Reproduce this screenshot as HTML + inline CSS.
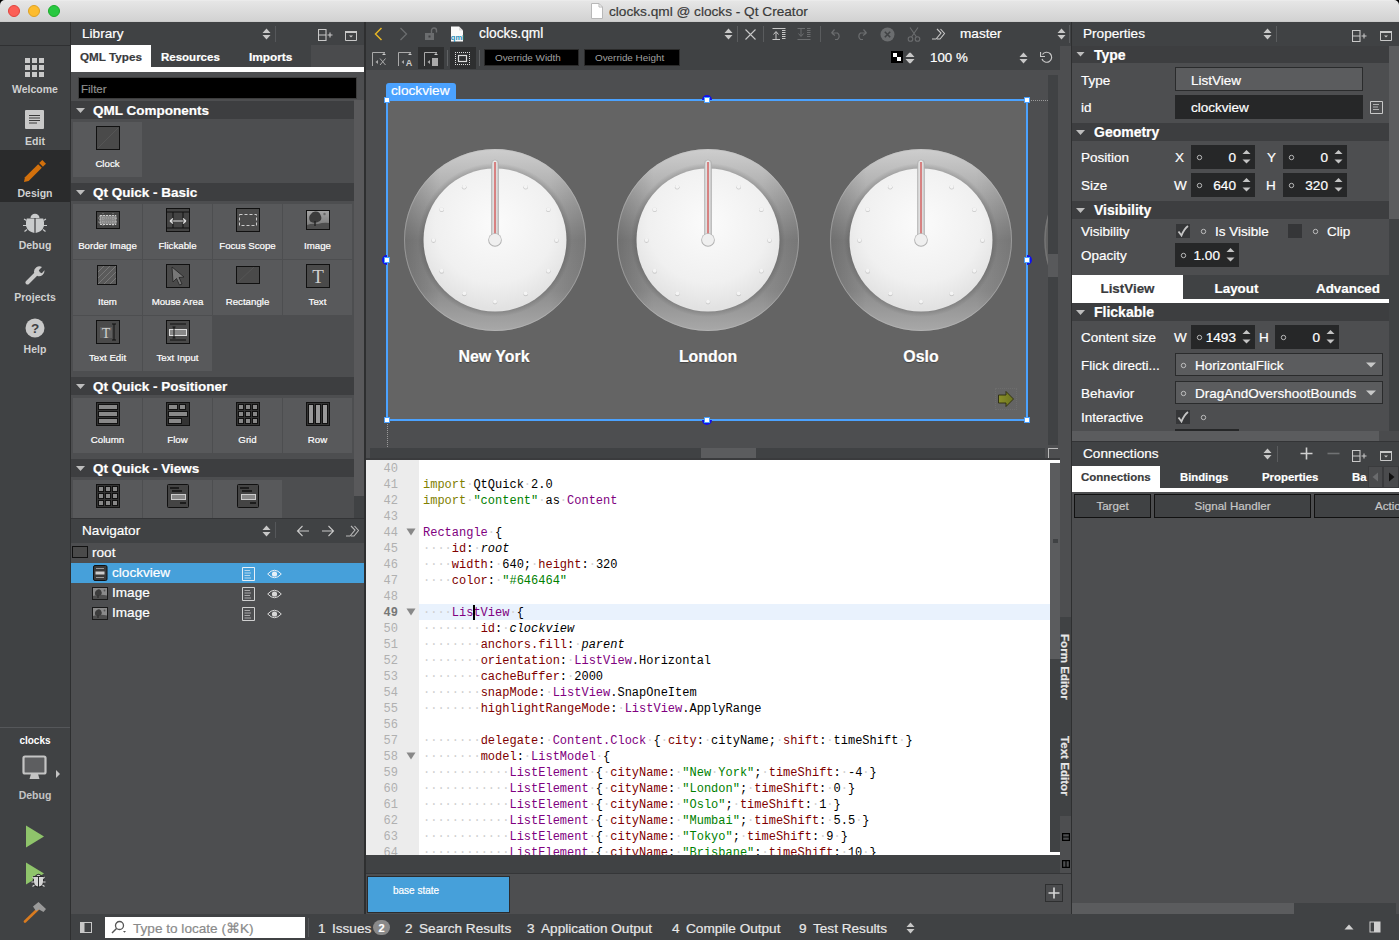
<!DOCTYPE html>
<html><head><meta charset="utf-8">
<style>
*{margin:0;padding:0;box-sizing:border-box}
html,body{width:1399px;height:940px;overflow:hidden;background:#4d4e50;font-family:"Liberation Sans",sans-serif;color:#fff}
.a{position:absolute}
.t{position:absolute;white-space:nowrap;line-height:1;-webkit-text-stroke:0.2px currentColor}
#code .t{-webkit-text-stroke:0}
#title{left:0;top:0;width:1399px;height:22px;background:linear-gradient(#f0f0f0 0,#e6e6e6 1px,#d2d2d2 21px,#c4c4c4 22px);border-radius:5px 5px 0 0}
html,body{background:#4d4e50}
#modebar{left:0;top:22px;width:71px;height:918px;background:#404244;border-right:1px solid #2e2f30}
.hdr{background:#404244}
.sec{background:#3d3e40}
.cell{background:#58595b}
.mlbl{position:absolute;left:0;width:70px;text-align:center;font-size:10.5px;font-weight:bold;color:#cfd0d0;line-height:1}
</style></head><body>
<!-- TITLE BAR -->
<div class="a" style="left:0;top:0;width:6px;height:6px;background:#000"></div><div class="a" style="left:1393px;top:0;width:6px;height:6px;background:#000"></div>
<div id="title" class="a">
  <div class="a" style="left:8px;top:5px;width:12px;height:12px;border-radius:50%;background:#fc5f57;border:0.5px solid #e0443e"></div>
  <div class="a" style="left:28px;top:5px;width:12px;height:12px;border-radius:50%;background:#fdbc2e;border:0.5px solid #dea123"></div>
  <div class="a" style="left:48px;top:5px;width:12px;height:12px;border-radius:50%;background:#28c840;border:0.5px solid #1aab29"></div>
  <svg class="a" style="left:591px;top:3px" width="12" height="16" viewBox="0 0 12 16"><path d="M0.5 0.5H8L11.5 4V15.5H0.5Z" fill="#fff" stroke="#b8b8b8"/><path d="M8 0.5V4H11.5" fill="none" stroke="#b8b8b8"/></svg>
  <div class="t" style="left:609px;top:5px;font-size:13.65px;color:#3a3a3a">clocks.qml @ clocks - Qt Creator</div>
</div>
<!-- MODE BAR -->

<div id="modebar" class="a">
  <div class="a" style="left:0;top:23px;width:70px;height:1px;background:#2f3032"></div>
  <!-- welcome -->
  <svg class="a" style="left:25px;top:36px" width="20" height="20" viewBox="0 0 20 20" fill="#c9c9c9">
    <rect x="0" y="0" width="5" height="5"/><rect x="7" y="0" width="5" height="5"/><rect x="14" y="0" width="5" height="5"/>
    <rect x="0" y="7" width="5" height="5"/><rect x="7" y="7" width="5" height="5"/><rect x="14" y="7" width="5" height="5"/>
    <rect x="0" y="14" width="5" height="5"/><rect x="7" y="14" width="5" height="5"/><rect x="14" y="14" width="5" height="5"/>
  </svg>
  <div class="mlbl" style="top:62px">Welcome</div>
  <!-- edit -->
  <svg class="a" style="left:25px;top:88px" width="20" height="20" viewBox="0 0 20 20">
    <rect x="0" y="0" width="19" height="19" rx="1" fill="#c9c9c9"/>
    <path d="M4 5.5H15M4 8H15M4 10.5H15M4 13H12" stroke="#3a3a3a" stroke-width="1"/>
  </svg>
  <div class="mlbl" style="top:114px">Edit</div>
  <!-- design selected -->
  <div class="a" style="left:0;top:128px;width:70px;height:52px;background:#2a2b2c"></div>
  <svg class="a" style="left:20px;top:136px" width="28" height="28" viewBox="0 0 28 28"><path d="M4 24L8.64 23.04L21.84 9.84L18.16 6.16L4.96 19.36Z" fill="#d2700c"/><path d="M22.9 8.8L26 5.7L22.3 2L19.2 5.1Z" fill="#d2700c"/></svg>
  <div class="mlbl" style="top:166px">Design</div>
  <!-- debug -->
  <svg class="a" style="left:22px;top:190px" width="26" height="22" viewBox="0 0 26 22">
<path d="M8.5 6A4.5 4.2 0 0 1 17.5 6Z" fill="#c9cbcc"/>
<path d="M12.4 6.5H4.8Q3.5 10 4 14Q5.5 19.5 12.4 21Z" fill="#c9cbcc"/>
<path d="M13.6 6.5H21.2Q22.5 10 22 14Q20.5 19.5 13.6 21Z" fill="#c9cbcc"/>
<path d="M4.5 8.5L2 7M4 13.5H1M5 17.5L2.5 19.5M21.5 8.5L24 7M22 13.5H25M21 17.5L23.5 19.5" stroke="#c9cbcc" stroke-width="1.2"/>
</svg>
  <div class="mlbl" style="top:218px">Debug</div>
  <!-- projects -->
  <svg class="a" style="left:25px;top:243px" width="20" height="20" viewBox="0 0 20 20">
    <path d="M2.5 17.5L10.5 9.5" stroke="#c9c9c9" stroke-width="4" stroke-linecap="round"/>
    <path d="M9 7.5A5.5 5.5 0 0 1 17 2L13.8 5.2L14.8 7.2L16.8 8.2L19.5 5.2A5.5 5.5 0 0 1 12.5 11Z" fill="#c9c9c9"/>
  </svg>
  <div class="mlbl" style="top:270px">Projects</div>
  <!-- help -->
  <svg class="a" style="left:25px;top:296px" width="20" height="20" viewBox="0 0 20 20">
    <circle cx="10" cy="10" r="9.5" fill="#c9c9c9"/>
    <text x="10" y="15" text-anchor="middle" font-family="Liberation Sans" font-weight="bold" font-size="13.5" fill="#404244">?</text>
  </svg>
  <div class="mlbl" style="top:322px">Help</div>
  <!-- bottom -->
  <div class="a" style="left:0;top:705px;width:70px;height:1px;background:#55575a"></div>
  <div class="mlbl" style="top:714px;color:#fff;font-size:10px">clocks</div>
  <svg class="a" style="left:22px;top:733px" width="40" height="26" viewBox="0 0 40 26">
    <rect x="1.5" y="1.5" width="22" height="17" rx="1.5" fill="#5d5e60" stroke="#c4c4c4" stroke-width="2.2"/>
    <path d="M9 19H16L17.5 24H7.5Z" fill="#c4c4c4"/>
    <path d="M34 15L38 19L34 23Z" fill="#c4c4c4"/>
  </svg>
  <div class="mlbl" style="top:768px;color:#c4c4c4">Debug</div>
  <svg class="a" style="left:25px;top:803px" width="20" height="23" viewBox="0 0 20 23"><path d="M1 0.5L19 11.5L1 22.5Z" fill="#8fc46b"/></svg>
  <svg class="a" style="left:25px;top:840px" width="24" height="27" viewBox="0 0 24 27">
<path d="M1 0.5L19 11.5L1 22.5Z" fill="#8fc46b"/>
<g stroke="#2a2b2c" stroke-width="2.2" fill="#2a2b2c"><path d="M11.5 14Q13.5 11.5 15.5 14Z M9 15H13V24.5Q9.5 24 9 20Z M14 15H18V20Q17.5 24 14 24.5Z"/></g>
<path d="M11.5 14Q13.5 11.5 15.5 14Z M9 15H13V24.5Q9.5 24 9 20Z M14 15H18V20Q17.5 24 14 24.5Z" fill="#d4d4d4"/>
<path d="M9 16.5L7.5 15M9 20H6.5M9.5 23L7.5 24.5M18 16.5L19.5 15M18 20H20.5M17.5 23L19.5 24.5" stroke="#d4d4d4" stroke-width="1.1"/>
</svg>
  <svg class="a" style="left:23px;top:879px" width="25" height="22" viewBox="0 0 25 22">
    <path d="M2 20.5L15 8" stroke="#d97b1f" stroke-width="2.6" stroke-linecap="round"/>
    <path d="M10 5.5L15.5 1L23 8L20.5 11L16 8.5L13 10Z" fill="#9a9a9a"/>
  </svg>
</div>

<!-- LIBRARY -->
<div class="a hdr" style="left:71px;top:22px;width:293px;height:23px"></div>
<div class="t" style="left:82px;top:27px;font-size:13.6px;color:#fff">Library</div>
<svg class="a" style="left:262px;top:28px" width="9" height="12" viewBox="0 0 9 12"><path d="M0.5 5L4.5 0.5L8.5 5Z M0.5 7L4.5 11.5L8.5 7Z" fill="#c8c8c8"/></svg>
<div class="a" style="left:275px;top:26px;width:1px;height:16px;background:#55575a"></div>
<svg class="a" style="left:318px;top:29px" width="16" height="13" viewBox="0 0 16 13"><path d="M0.5 0.5H8V11.5H0.5Z M0.5 6H8" fill="none" stroke="#c8c8c8" stroke-width="1.1"/><path d="M9.5 6H14.5M12 3.5V8.5" stroke="#c8c8c8" stroke-width="1.1"/></svg>
<svg class="a" style="left:345px;top:31px" width="12" height="10" viewBox="0 0 12 10"><path d="M0.5 1.5H11.5V9.5H0.5Z" fill="none" stroke="#c8c8c8" stroke-width="1"/><rect x="0" y="0" width="12" height="2" fill="#c8c8c8"/><path d="M4 4.5H8L6 6.5Z" fill="#c8c8c8"/></svg>
<div class="a" style="left:71px;top:45px;width:293px;height:23px;background:#4a4b4d"></div>
<div class="a hdr" style="left:151px;top:45px;width:160px;height:23px"></div>
<div class="a" style="left:71px;top:45px;width:80px;height:27px;background:#fff"></div>
<div class="a" style="left:71px;top:67px;width:293px;height:5px;background:#fff"></div>
<div class="t" style="left:80px;top:51px;font-size:11.7px;font-weight:bold;color:#3a3b3d">QML Types</div>
<div class="t" style="left:161px;top:52px;font-size:11.5px;font-weight:bold;color:#fff">Resources</div>
<div class="t" style="left:249px;top:52px;font-size:11.8px;font-weight:bold;color:#fff">Imports</div>
<div class="a" style="left:78px;top:77px;width:279px;height:22px;background:#000;border:1px solid #3c3c3c"></div>
<div class="t" style="left:81px;top:84px;font-size:11.5px;color:#8f8f8f">Filter</div>
<div class="a" style="left:354px;top:100px;width:10px;height:418px;background:#404244"></div>
<div class="a" style="left:354px;top:100px;width:10px;height:396px;background:#59595b"></div>
<div class="a sec" style="left:71px;top:101px;width:283px;height:18px"></div>
<svg class="a" style="left:76px;top:108px" width="9" height="5" viewBox="0 0 9 5"><path d="M0 0H9L4.5 5Z" fill="#bdbdbd"/></svg>
<div class="t" style="left:93px;top:104px;font-size:13.5px;font-weight:bold;color:#fff">QML Components</div>
<div class="a cell" style="left:73px;top:122px;width:69px;height:55px"></div><svg class="a" style="left:96px;top:126px" width="24" height="24" viewBox="0 0 24 24"><rect x="0.5" y="0.5" width="23" height="23" fill="#4a4a4a" stroke="#111"/><path d="M2 22L22 2" stroke="#555" stroke-width="1"/></svg><div class="t" style="left:73px;top:159px;width:69px;text-align:center;font-size:9.7px;color:#fff">Clock</div>
<div class="a sec" style="left:71px;top:183px;width:283px;height:18px"></div>
<svg class="a" style="left:76px;top:190px" width="9" height="5" viewBox="0 0 9 5"><path d="M0 0H9L4.5 5Z" fill="#bdbdbd"/></svg>
<div class="t" style="left:93px;top:186px;font-size:13.5px;font-weight:bold;color:#fff">Qt Quick - Basic</div>
<div class="a cell" style="left:73px;top:204px;width:69px;height:55px"></div><svg class="a" style="left:96px;top:208px" width="24" height="24" viewBox="0 0 24 24"><rect x="0.5" y="3.5" width="23" height="17" fill="#444" stroke="#111"/><rect x="4" y="7.5" width="16" height="9" fill="#888" stroke="#ccc" stroke-dasharray="2 1"/><path d="M2 10H22M2 14H22M7 5V19M17 5V19" stroke="#bbb" stroke-width="0.6" stroke-dasharray="1 1"/></svg><div class="t" style="left:73px;top:241px;width:69px;text-align:center;font-size:9.7px;color:#fff">Border Image</div>
<div class="a cell" style="left:143px;top:204px;width:69px;height:55px"></div><svg class="a" style="left:166px;top:208px" width="24" height="24" viewBox="0 0 24 24"><rect x="0.5" y="0.5" width="23" height="23" fill="#444" stroke="#111"/><path d="M0.5 4H23.5M0.5 20H23.5M7 4V20M17 4V20" stroke="#111"/><path d="M4 13H20M4 13L7 10.5M4 13L7 15.5M20 13L17 10.5M20 13L17 15.5" stroke="#ddd" stroke-width="1.2" fill="none"/></svg><div class="t" style="left:143px;top:241px;width:69px;text-align:center;font-size:9.7px;color:#fff">Flickable</div>
<div class="a cell" style="left:213px;top:204px;width:69px;height:55px"></div><svg class="a" style="left:236px;top:208px" width="24" height="24" viewBox="0 0 24 24"><rect x="0.5" y="0.5" width="23" height="23" fill="#4a4a4a" stroke="#111"/><rect x="3.5" y="6.5" width="17" height="11" fill="none" stroke="#ccc" stroke-dasharray="3 2"/></svg><div class="t" style="left:213px;top:241px;width:69px;text-align:center;font-size:9.7px;color:#fff">Focus Scope</div>
<div class="a cell" style="left:283px;top:204px;width:69px;height:55px"></div><svg class="a" style="left:306px;top:208px" width="24" height="24" viewBox="0 0 24 24"><defs><linearGradient id="imgbg" x1="0" y1="0" x2="0" y2="1"><stop offset="0" stop-color="#a5a5a5"/><stop offset="1" stop-color="#707070"/></linearGradient></defs><rect x="0.5" y="2.5" width="23" height="19" fill="url(#imgbg)" stroke="#111"/><path d="M1 21V17Q6 15 12 16Q18 14 23 15V21Z" fill="#4e4e4e"/><path d="M3.5 12Q2.5 8 5 6Q6.5 3 10 3.5Q13.5 3.5 14.5 7Q16.5 10.5 14 13Q10.5 15.5 6.5 14.5Q4 14 3.5 12Z" fill="#3c3c3c"/><path d="M9 13V18" stroke="#222" stroke-width="1.4"/><circle cx="18.5" cy="6" r="1.2" fill="#666"/></svg><div class="t" style="left:283px;top:241px;width:69px;text-align:center;font-size:9.7px;color:#fff">Image</div>
<div class="a cell" style="left:73px;top:260px;width:69px;height:55px"></div><svg class="a" style="left:96px;top:264px" width="24" height="24" viewBox="0 0 24 24"><rect x="1.5" y="1.5" width="19" height="19" fill="#5a5a5a" stroke="#111"/><path d="M2 8L8 2M2 14L14 2M2 20L20 2M8 20L20 8M14 20L20 14" stroke="#777" stroke-width="1"/></svg><div class="t" style="left:73px;top:297px;width:69px;text-align:center;font-size:9.7px;color:#fff">Item</div>
<div class="a cell" style="left:143px;top:260px;width:69px;height:55px"></div><svg class="a" style="left:166px;top:264px" width="24" height="24" viewBox="0 0 24 24"><rect x="0.5" y="0.5" width="23" height="23" fill="#4a4a4a" stroke="#111"/><path d="M6 3L18 13L13 13.5L16 20L13.5 21L10.5 14.5L7 18Z" fill="#777" stroke="#222" stroke-width="0.8"/></svg><div class="t" style="left:143px;top:297px;width:69px;text-align:center;font-size:9.7px;color:#fff">Mouse Area</div>
<div class="a cell" style="left:213px;top:260px;width:69px;height:55px"></div><svg class="a" style="left:236px;top:264px" width="24" height="24" viewBox="0 0 24 24"><rect x="0.5" y="2.5" width="23" height="17" fill="#4a4a4a" stroke="#111"/><path d="M2 18L18 3" stroke="#555"/></svg><div class="t" style="left:213px;top:297px;width:69px;text-align:center;font-size:9.7px;color:#fff">Rectangle</div>
<div class="a cell" style="left:283px;top:260px;width:69px;height:55px"></div><svg class="a" style="left:306px;top:264px" width="24" height="24" viewBox="0 0 24 24"><rect x="0.5" y="0.5" width="23" height="23" fill="#4a4a4a" stroke="#111"/><text x="12" y="19" text-anchor="middle" font-family="Liberation Serif" font-size="19" fill="#cfcfcf">T</text></svg><div class="t" style="left:283px;top:297px;width:69px;text-align:center;font-size:9.7px;color:#fff">Text</div>
<div class="a cell" style="left:73px;top:316px;width:69px;height:55px"></div><svg class="a" style="left:96px;top:320px" width="24" height="24" viewBox="0 0 24 24"><rect x="0.5" y="0.5" width="23" height="23" fill="#4a4a4a" stroke="#111"/><rect x="4" y="7" width="12" height="11" fill="#5e5e5e"/><text x="10" y="18" text-anchor="middle" font-family="Liberation Serif" font-size="14" fill="#cfcfcf">T</text><path d="M18 4V20M16 4H20M16 20H20" stroke="#111" stroke-width="1"/></svg><div class="t" style="left:73px;top:353px;width:69px;text-align:center;font-size:9.7px;color:#fff">Text Edit</div>
<div class="a cell" style="left:143px;top:316px;width:69px;height:55px"></div><svg class="a" style="left:166px;top:320px" width="24" height="24" viewBox="0 0 24 24"><rect x="0.5" y="0.5" width="23" height="23" fill="#4a4a4a" stroke="#111"/><path d="M4 4H20M4 20H20" stroke="#111" stroke-width="1.2"/><rect x="3.5" y="9.5" width="17" height="6" fill="#888" stroke="#ddd"/><path d="M8 7V18M6.5 7H9.5M6.5 18H9.5" stroke="#111"/></svg><div class="t" style="left:143px;top:353px;width:69px;text-align:center;font-size:9.7px;color:#fff">Text Input</div>
<div class="a sec" style="left:71px;top:377px;width:283px;height:18px"></div>
<svg class="a" style="left:76px;top:384px" width="9" height="5" viewBox="0 0 9 5"><path d="M0 0H9L4.5 5Z" fill="#bdbdbd"/></svg>
<div class="t" style="left:93px;top:380px;font-size:13.5px;font-weight:bold;color:#fff">Qt Quick - Positioner</div>
<div class="a cell" style="left:73px;top:398px;width:69px;height:55px"></div><svg class="a" style="left:96px;top:402px" width="24" height="24" viewBox="0 0 24 24"><rect x="0.5" y="0.5" width="23" height="23" fill="#333" stroke="#111"/><rect x="2.5" y="2.5" width="19" height="5" fill="#888" stroke="#111"/><rect x="2.5" y="9.5" width="19" height="5" fill="#888" stroke="#111"/><rect x="2.5" y="16.5" width="19" height="5" fill="#888" stroke="#111"/></svg><div class="t" style="left:73px;top:435px;width:69px;text-align:center;font-size:9.7px;color:#fff">Column</div>
<div class="a cell" style="left:143px;top:398px;width:69px;height:55px"></div><svg class="a" style="left:166px;top:402px" width="24" height="24" viewBox="0 0 24 24"><rect x="0.5" y="0.5" width="23" height="23" fill="#333" stroke="#111"/><rect x="2.5" y="2.5" width="9" height="5" fill="#888" stroke="#111"/><rect x="13.5" y="2.5" width="6" height="5" fill="#888" stroke="#111"/><rect x="2.5" y="9.5" width="19" height="5" fill="#888" stroke="#111"/><rect x="2.5" y="16.5" width="13" height="5" fill="#888" stroke="#111"/></svg><div class="t" style="left:143px;top:435px;width:69px;text-align:center;font-size:9.7px;color:#fff">Flow</div>
<div class="a cell" style="left:213px;top:398px;width:69px;height:55px"></div><svg class="a" style="left:236px;top:402px" width="24" height="24" viewBox="0 0 24 24"><rect x="0.5" y="0.5" width="23" height="23" fill="#333" stroke="#111"/><rect x="2.5" y="2.5" width="5" height="5" fill="#888" stroke="#111"/><rect x="2.5" y="9.5" width="5" height="5" fill="#888" stroke="#111"/><rect x="2.5" y="16.5" width="5" height="5" fill="#888" stroke="#111"/><rect x="9.5" y="2.5" width="5" height="5" fill="#888" stroke="#111"/><rect x="9.5" y="9.5" width="5" height="5" fill="#888" stroke="#111"/><rect x="9.5" y="16.5" width="5" height="5" fill="#888" stroke="#111"/><rect x="16.5" y="2.5" width="5" height="5" fill="#888" stroke="#111"/><rect x="16.5" y="9.5" width="5" height="5" fill="#888" stroke="#111"/><rect x="16.5" y="16.5" width="5" height="5" fill="#888" stroke="#111"/></svg><div class="t" style="left:213px;top:435px;width:69px;text-align:center;font-size:9.7px;color:#fff">Grid</div>
<div class="a cell" style="left:283px;top:398px;width:69px;height:55px"></div><svg class="a" style="left:306px;top:402px" width="24" height="24" viewBox="0 0 24 24"><rect x="0.5" y="0.5" width="23" height="23" fill="#333" stroke="#111"/><rect x="2.5" y="2.5" width="5" height="19" fill="#999" stroke="#111"/><rect x="9.5" y="2.5" width="5" height="19" fill="#999" stroke="#111"/><rect x="16.5" y="2.5" width="5" height="19" fill="#999" stroke="#111"/></svg><div class="t" style="left:283px;top:435px;width:69px;text-align:center;font-size:9.7px;color:#fff">Row</div>
<div class="a sec" style="left:71px;top:459px;width:283px;height:18px"></div>
<svg class="a" style="left:76px;top:466px" width="9" height="5" viewBox="0 0 9 5"><path d="M0 0H9L4.5 5Z" fill="#bdbdbd"/></svg>
<div class="t" style="left:93px;top:462px;font-size:13.5px;font-weight:bold;color:#fff">Qt Quick - Views</div>
<div class="a cell" style="left:73px;top:480px;width:69px;height:38px"></div><svg class="a" style="left:96px;top:484px" width="24" height="24" viewBox="0 0 24 24"><rect x="0.5" y="0.5" width="23" height="23" fill="#333" stroke="#111"/><rect x="2.5" y="2.5" width="5" height="5" fill="#888" stroke="#111"/><rect x="2.5" y="9.5" width="5" height="5" fill="#888" stroke="#111"/><rect x="2.5" y="16.5" width="5" height="5" fill="#888" stroke="#111"/><rect x="9.5" y="2.5" width="5" height="5" fill="#888" stroke="#111"/><rect x="9.5" y="9.5" width="5" height="5" fill="#888" stroke="#111"/><rect x="9.5" y="16.5" width="5" height="5" fill="#888" stroke="#111"/><rect x="16.5" y="2.5" width="5" height="5" fill="#888" stroke="#111"/><rect x="16.5" y="9.5" width="5" height="5" fill="#888" stroke="#111"/><rect x="16.5" y="16.5" width="5" height="5" fill="#888" stroke="#111"/></svg>
<div class="a cell" style="left:143px;top:480px;width:69px;height:38px"></div><svg class="a" style="left:166px;top:484px" width="24" height="24" viewBox="0 0 24 24"><rect x="1.5" y="0.5" width="21" height="23" rx="1" fill="#444" stroke="#111"/><path d="M4 4H13M6 7H16M14 19H20" stroke="#111" stroke-width="1.5"/><rect x="5.5" y="10.5" width="14" height="5" fill="#888" stroke="#ccc"/></svg>
<div class="a cell" style="left:213px;top:480px;width:69px;height:38px"></div><svg class="a" style="left:236px;top:484px" width="24" height="24" viewBox="0 0 24 24"><rect x="1.5" y="0.5" width="21" height="23" rx="1" fill="#444" stroke="#111"/><path d="M4 4H13M6 7H16M14 19H20" stroke="#111" stroke-width="1.5"/><rect x="5.5" y="10.5" width="14" height="5" fill="#888" stroke="#ccc"/></svg>
<!-- NAVIGATOR -->
<div class="a hdr" style="left:71px;top:518px;width:293px;height:25px;border-top:1px solid #333436"></div>
<div class="t" style="left:82px;top:524px;font-size:13.6px;color:#fff">Navigator</div>
<svg class="a" style="left:262px;top:525px" width="9" height="12" viewBox="0 0 9 12"><path d="M0.5 5L4.5 0.5L8.5 5Z M0.5 7L4.5 11.5L8.5 7Z" fill="#c8c8c8"/></svg>
<div class="a" style="left:275px;top:522px;width:1px;height:16px;background:#55575a"></div>
<svg class="a" style="left:296px;top:525px" width="14" height="12" viewBox="0 0 14 12"><path d="M13 6H1.5M6.5 1L1.5 6L6.5 11" fill="none" stroke="#c8c8c8" stroke-width="1.1"/></svg>
<svg class="a" style="left:321px;top:525px" width="14" height="12" viewBox="0 0 14 12"><path d="M1 6H12.5M7.5 1L12.5 6L7.5 11" fill="none" stroke="#c8c8c8" stroke-width="1.1"/></svg>
<svg class="a" style="left:345px;top:525px" width="14" height="12" viewBox="0 0 14 12"><path d="M1 11H5L10 5L6 1M6 11H9L13.5 5.5L9.5 1" fill="none" stroke="#b8b8b8" stroke-width="1.1"/></svg>
<svg class="a" style="left:72px;top:546px" width="17" height="13" viewBox="0 0 17 13"><rect x="0.5" y="0.5" width="15" height="11" fill="#4a4a4a" stroke="#111"/></svg>
<div class="t" style="left:92px;top:546px;font-size:13.6px;color:#fff">root</div>
<div class="a" style="left:71px;top:563px;width:293px;height:20px;background:#46a0da"></div>
<svg class="a" style="left:93px;top:565px" width="15" height="16" viewBox="0 0 15 16"><rect x="0.5" y="0.5" width="13.5" height="15" rx="1.5" fill="#3a3a3a" stroke="#111"/><path d="M3 3.5H11M3 12.5H11" stroke="#999" stroke-width="1"/><rect x="2.5" y="6.5" width="9" height="3" fill="#ccc"/></svg>
<div class="t" style="left:112px;top:566px;font-size:13.6px;color:#fff">clockview</div>
<svg class="a" style="left:242px;top:567px" width="13" height="14" viewBox="0 0 13 14"><path d="M0.5 0.5H12.5V13.5H0.5Z" fill="none" stroke="#e6f0f8"/><path d="M2.5 3.5H8M2.5 6H9M2.5 8.5H8M2.5 11H9" stroke="#e6f0f8" stroke-width="0.7"/></svg>
<svg class="a" style="left:267px;top:569px" width="15" height="10" viewBox="0 0 15 10"><path d="M0.7 5Q7.5 -2.5 14.3 5Q7.5 12.5 0.7 5Z" fill="none" stroke="#e6f0f8" stroke-width="1"/><circle cx="7.5" cy="5" r="2.6" fill="#e6f0f8"/></svg>
<svg class="a" style="left:92px;top:587px" width="16" height="13" viewBox="0 0 16 13"><rect x="0.5" y="0.5" width="15" height="12" fill="#8a8a8a" stroke="#1a1a1a"/><path d="M1 12V9Q8 7 15 8.5V12Z" fill="#4e4e4e"/><path d="M3 7.5Q2.5 4 5 3Q7 1.5 9 3.5Q10.5 5.5 9 8Q6.5 9.5 4 8.5Z" fill="#3c3c3c"/><path d="M6 8.5V11" stroke="#222" stroke-width="1"/><circle cx="12.5" cy="3.5" r="0.9" fill="#555"/></svg>
<div class="t" style="left:112px;top:586px;font-size:13.6px;color:#fff">Image</div>
<svg class="a" style="left:242px;top:587px" width="13" height="14" viewBox="0 0 13 14"><path d="M0.5 0.5H12.5V13.5H0.5Z" fill="none" stroke="#d0d0d0"/><path d="M2.5 3.5H8M2.5 6H9M2.5 8.5H8M2.5 11H9" stroke="#d0d0d0" stroke-width="0.7"/></svg>
<svg class="a" style="left:267px;top:589px" width="15" height="10" viewBox="0 0 15 10"><path d="M0.7 5Q7.5 -2.5 14.3 5Q7.5 12.5 0.7 5Z" fill="none" stroke="#d8d8d8" stroke-width="1"/><circle cx="7.5" cy="5" r="2.6" fill="#d8d8d8"/></svg>
<svg class="a" style="left:92px;top:607px" width="16" height="13" viewBox="0 0 16 13"><rect x="0.5" y="0.5" width="15" height="12" fill="#8a8a8a" stroke="#1a1a1a"/><path d="M1 12V9Q8 7 15 8.5V12Z" fill="#4e4e4e"/><path d="M3 7.5Q2.5 4 5 3Q7 1.5 9 3.5Q10.5 5.5 9 8Q6.5 9.5 4 8.5Z" fill="#3c3c3c"/><path d="M6 8.5V11" stroke="#222" stroke-width="1"/><circle cx="12.5" cy="3.5" r="0.9" fill="#555"/></svg>
<div class="t" style="left:112px;top:606px;font-size:13.6px;color:#fff">Image</div>
<svg class="a" style="left:242px;top:607px" width="13" height="14" viewBox="0 0 13 14"><path d="M0.5 0.5H12.5V13.5H0.5Z" fill="none" stroke="#d0d0d0"/><path d="M2.5 3.5H8M2.5 6H9M2.5 8.5H8M2.5 11H9" stroke="#d0d0d0" stroke-width="0.7"/></svg>
<svg class="a" style="left:267px;top:609px" width="15" height="10" viewBox="0 0 15 10"><path d="M0.7 5Q7.5 -2.5 14.3 5Q7.5 12.5 0.7 5Z" fill="none" stroke="#d8d8d8" stroke-width="1"/><circle cx="7.5" cy="5" r="2.6" fill="#d8d8d8"/></svg>
<!-- STATUS -->
<div class="a hdr" style="left:71px;top:914px;width:1328px;height:26px"></div>
<svg class="a" style="left:80px;top:922px" width="12" height="11" viewBox="0 0 12 11"><rect x="0.5" y="0.5" width="11" height="10" fill="none" stroke="#c8c8c8"/><rect x="0.5" y="0.5" width="4" height="10" fill="#c8c8c8"/></svg>
<div class="a" style="left:105px;top:917px;width:200px;height:21px;background:#fff"></div>
<svg class="a" style="left:111px;top:920px" width="16" height="14" viewBox="0 0 16 14"><circle cx="8.5" cy="5.5" r="4" fill="none" stroke="#555" stroke-width="1.3"/><path d="M5.5 8.5L1 13" stroke="#555" stroke-width="1.5"/><path d="M12 11H15L13.5 12.8Z" fill="#555"/></svg>
<div class="t" style="left:133px;top:922px;font-size:13.6px;color:#8a8a8a">Type to locate (⌘K)</div>
<div class="a" style="left:308px;top:918px;width:1px;height:19px;background:#55575a"></div>
<div class="t" style="left:318px;top:922px;font-size:13.6px;color:#e8e8e8">1</div>
<div class="t" style="left:332px;top:922px;font-size:13.6px;color:#e8e8e8">Issues</div>
<div class="t" style="left:405px;top:922px;font-size:13.6px;color:#e8e8e8">2</div>
<div class="t" style="left:419px;top:922px;font-size:13.6px;color:#e8e8e8">Search Results</div>
<div class="t" style="left:527px;top:922px;font-size:13.6px;color:#e8e8e8">3</div>
<div class="t" style="left:541px;top:922px;font-size:13.6px;color:#e8e8e8">Application Output</div>
<div class="t" style="left:672px;top:922px;font-size:13.6px;color:#e8e8e8">4</div>
<div class="t" style="left:686px;top:922px;font-size:13.6px;color:#e8e8e8">Compile Output</div>
<div class="t" style="left:799px;top:922px;font-size:13.6px;color:#e8e8e8">9</div>
<div class="t" style="left:813px;top:922px;font-size:13.6px;color:#e8e8e8">Test Results</div>
<div class="a" style="left:373px;top:920px;width:17px;height:15px;border-radius:8px;background:#8a8a8a"></div>
<div class="t" style="left:373px;top:923px;width:17px;text-align:center;font-size:11px;font-weight:bold;color:#fff">2</div>
<svg class="a" style="left:906px;top:922px" width="9" height="12" viewBox="0 0 9 12"><path d="M0.5 5L4.5 0.5L8.5 5Z M0.5 7L4.5 11.5L8.5 7Z" fill="#c8c8c8"/></svg>
<svg class="a" style="left:1344px;top:924px" width="10" height="6" viewBox="0 0 10 6"><path d="M0.5 5.5L5 0.5L9.5 5.5Z" fill="#d0d0d0"/></svg>
<svg class="a" style="left:1369px;top:921px" width="12" height="12" viewBox="0 0 12 12"><rect x="0.5" y="0.5" width="11" height="11" fill="#d0d0d0"/><rect x="1.5" y="1.5" width="3.5" height="9" fill="#404244"/></svg>
<!-- CENTER -->
<div class="a" style="left:364px;top:22px;width:2px;height:892px;background:#2e2f30"></div>
<div class="a" style="left:1071px;top:22px;width:1px;height:892px;background:#2e2f30"></div>
<div class="a hdr" style="left:366px;top:22px;width:705px;height:24px"></div>
<svg class="a" style="left:374px;top:27px" width="9" height="14" viewBox="0 0 9 14"><path d="M7.5 1L1.5 7L7.5 13" fill="none" stroke="#e5b525" stroke-width="1.5"/></svg>
<svg class="a" style="left:399px;top:27px" width="9" height="14" viewBox="0 0 9 14"><path d="M1.5 1L7.5 7L1.5 13" fill="none" stroke="#6b6d6f" stroke-width="1.3"/></svg>
<svg class="a" style="left:424px;top:27px" width="14" height="14" viewBox="0 0 14 14"><rect x="1" y="6" width="9" height="7" fill="#6b6d6f"/><rect x="4.5" y="8.5" width="2" height="2" fill="#404244"/><path d="M7.5 6V3.5A2.5 2.5 0 0 1 12.5 3.5V5.5" fill="none" stroke="#6b6d6f" stroke-width="1.4"/></svg>
<svg class="a" style="left:450px;top:26px" width="15" height="16" viewBox="0 0 15 16"><path d="M1 0.5H9L13 4.5V15.5H1Z" fill="#fafafa"/><path d="M9 0.5V4.5H13" fill="#ddd"/><text x="7.5" y="14" text-anchor="middle" font-family="Liberation Sans" font-weight="bold" font-size="7.5" fill="#1c8ab8">qml</text></svg>
<div class="t" style="left:479px;top:27px;font-size:13.8px;color:#fff">clocks.qml</div>
<svg class="a" style="left:724px;top:28px" width="9" height="12" viewBox="0 0 9 12"><path d="M0.5 5L4.5 0.5L8.5 5Z M0.5 7L4.5 11.5L8.5 7Z" fill="#c8c8c8"/></svg>
<div class="a" style="left:737px;top:26px;width:1px;height:16px;background:#5a5c5e"></div>
<svg class="a" style="left:745px;top:29px" width="11" height="11" viewBox="0 0 11 11"><path d="M0.5 0.5L10.5 10.5M10.5 0.5L0.5 10.5" stroke="#c8c8c8" stroke-width="1.1"/></svg>
<div class="a" style="left:763px;top:26px;width:1px;height:16px;background:#5a5c5e"></div>
<svg class="a" style="left:772px;top:27px" width="14" height="14" viewBox="0 0 14 14"><path d="M0.5 1.5H13.5M0.5 12.5H8M4 12V5M1.5 7.5L4 4.5L6.5 7.5M10 3.5H13.5M10 5.5H13.5M10 7.5H13.5M10 9.5H13.5M10 11.5H13.5" fill="none" stroke="#c8c8c8" stroke-width="1"/></svg>
<svg class="a" style="left:797px;top:27px" width="14" height="14" viewBox="0 0 14 14"><path d="M0.5 1.5H8M0.5 12.5H13.5M4 2V9M1.5 6.5L4 9.5L6.5 6.5M10 1.5H13.5M10 3.5H13.5M10 5.5H13.5M10 7.5H13.5M10 9.5H13.5" fill="none" stroke="#6b6d6f" stroke-width="1"/></svg>
<div class="a" style="left:820px;top:26px;width:1px;height:16px;background:#5a5c5e"></div>
<svg class="a" style="left:830px;top:28px" width="13" height="12" viewBox="0 0 13 12"><path d="M1.5 5L4.5 1.5M1.5 5L5 7.5M1.5 5H7.5A4 4 0 0 1 7.5 11.5H5" fill="none" stroke="#6b6d6f" stroke-width="1.2"/></svg>
<svg class="a" style="left:855px;top:28px" width="13" height="12" viewBox="0 0 13 12"><path d="M11.5 5L8.5 1.5M11.5 5L8 7.5M11.5 5H5.5A4 4 0 0 0 5.5 11.5H8" fill="none" stroke="#6b6d6f" stroke-width="1.2"/></svg>
<svg class="a" style="left:880px;top:27px" width="15" height="15" viewBox="0 0 15 15"><circle cx="7.5" cy="7.5" r="7" fill="#6b6d6f"/><path d="M4.8 4.8L10.2 10.2M10.2 4.8L4.8 10.2" stroke="#404244" stroke-width="1.6"/></svg>
<svg class="a" style="left:907px;top:27px" width="14" height="15" viewBox="0 0 14 15"><path d="M3 0.5L9.5 10M11 0.5L4.5 10" stroke="#6b6d6f" stroke-width="1.1"/><circle cx="3.5" cy="12" r="2.3" fill="none" stroke="#6b6d6f" stroke-width="1.1"/><circle cx="10.5" cy="12" r="2.3" fill="none" stroke="#6b6d6f" stroke-width="1.1"/></svg>
<svg class="a" style="left:931px;top:28px" width="15" height="12" viewBox="0 0 15 12"><path d="M1 11H5L10 5L6 1M6 11H9L13.5 5.5L9.5 1" fill="none" stroke="#c8c8c8" stroke-width="1.1"/></svg>
<div class="t" style="left:960px;top:27px;font-size:13.6px;color:#fff">master</div>
<svg class="a" style="left:1057px;top:28px" width="9" height="12" viewBox="0 0 9 12"><path d="M0.5 5L4.5 0.5L8.5 5Z M0.5 7L4.5 11.5L8.5 7Z" fill="#c8c8c8"/></svg>
<div class="a" style="left:1069px;top:25px;width:1px;height:18px;background:#5a5c5e"></div>
<div class="a hdr" style="left:366px;top:46px;width:694px;height:24px"></div>
<svg class="a" style="left:372px;top:52px" width="15" height="15" viewBox="0 0 15 15"><path d="M0.5 14V0.5H13" fill="none" stroke="#aaa" stroke-width="1"/><path d="M3.5 10L6 8V12Z" fill="#aaa"/><path d="M10 3L12 1L14 3Z" fill="#ccc"/><path d="M8 6.5L13.5 13M13.5 6.5L8 13" stroke="#aaa" stroke-width="1"/></svg>
<svg class="a" style="left:398px;top:52px" width="15" height="15" viewBox="0 0 15 15"><path d="M0.5 14V0.5H13" fill="none" stroke="#aaa" stroke-width="1"/><path d="M3.5 10L6 8V12Z" fill="#aaa"/><path d="M10 3L12 1L14 3Z" fill="#ccc"/><text x="11" y="14" text-anchor="middle" font-family="Liberation Sans" font-weight="bold" font-size="9" fill="#ccc">A</text></svg>
<div class="a" style="left:418px;top:47px;width:26px;height:22px;background:#2e2f30"></div>
<svg class="a" style="left:424px;top:52px" width="15" height="15" viewBox="0 0 15 15"><path d="M0.5 14V0.5H13" fill="none" stroke="#aaa" stroke-width="1"/><path d="M3.5 10L6 8V12Z" fill="#aaa"/><path d="M10 3L12 1L14 3Z" fill="#ccc"/><rect x="8" y="6" width="6" height="8" fill="#aaa"/></svg>
<div class="a" style="left:447px;top:50px;width:1px;height:16px;background:#606264"></div>
<div class="a" style="left:450px;top:47px;width:26px;height:22px;background:#2e2f30"></div>
<svg class="a" style="left:455px;top:52px" width="15" height="13" viewBox="0 0 15 13"><g fill="#ddd"><rect x="0" y="0" width="1" height="1"/><rect x="0" y="12" width="1" height="1"/><rect x="2" y="0" width="1" height="1"/><rect x="2" y="12" width="1" height="1"/><rect x="4" y="0" width="1" height="1"/><rect x="4" y="12" width="1" height="1"/><rect x="6" y="0" width="1" height="1"/><rect x="6" y="12" width="1" height="1"/><rect x="8" y="0" width="1" height="1"/><rect x="8" y="12" width="1" height="1"/><rect x="10" y="0" width="1" height="1"/><rect x="10" y="12" width="1" height="1"/><rect x="12" y="0" width="1" height="1"/><rect x="12" y="12" width="1" height="1"/><rect x="14" y="0" width="1" height="1"/><rect x="14" y="12" width="1" height="1"/><rect x="0" y="2" width="1" height="1"/><rect x="14" y="2" width="1" height="1"/><rect x="0" y="4" width="1" height="1"/><rect x="14" y="4" width="1" height="1"/><rect x="0" y="6" width="1" height="1"/><rect x="14" y="6" width="1" height="1"/><rect x="0" y="8" width="1" height="1"/><rect x="14" y="8" width="1" height="1"/><rect x="0" y="10" width="1" height="1"/><rect x="14" y="10" width="1" height="1"/></g><rect x="3.5" y="3.5" width="8" height="6" fill="none" stroke="#ddd" stroke-width="1.2"/></svg>
<div class="a" style="left:479px;top:50px;width:1px;height:16px;background:#606264"></div>
<div class="a" style="left:484px;top:49px;width:95px;height:17px;background:#000;border:1px solid #2a2a2a"></div>
<div class="t" style="left:495px;top:53px;font-size:9.9px;color:#a0a0a0;-webkit-text-stroke:0">Override Width</div>
<div class="a" style="left:584px;top:49px;width:96px;height:17px;background:#000;border:1px solid #2a2a2a"></div>
<div class="t" style="left:595px;top:53px;font-size:9.9px;color:#a0a0a0;-webkit-text-stroke:0">Override Height</div>
<svg class="a" style="left:891px;top:51px" width="12" height="12" viewBox="0 0 12 12"><rect width="12" height="12" fill="#000"/><rect x="2" y="2" width="4" height="4" fill="#fff"/><rect x="6" y="6" width="4" height="4" fill="#fff"/></svg>
<svg class="a" style="left:905px;top:52px" width="9" height="12" viewBox="0 0 9 12"><path d="M0.5 5L4.5 0.5L8.5 5Z M0.5 7L4.5 11.5L8.5 7Z" fill="#c8c8c8"/></svg>
<svg class="a" style="left:906px;top:52px" width="9" height="12" viewBox="0 0 9 12"><path d="M0.5 5L4.5 0.5L8.5 5Z M0.5 7L4.5 11.5L8.5 7Z" fill="#c8c8c8"/></svg><div class="t" style="left:930px;top:51px;font-size:13.3px;color:#fff">100 %</div>
<svg class="a" style="left:1019px;top:52px" width="9" height="12" viewBox="0 0 9 12"><path d="M0.5 5L4.5 0.5L8.5 5Z M0.5 7L4.5 11.5L8.5 7Z" fill="#c8c8c8"/></svg>
<svg class="a" style="left:1040px;top:51px" width="13" height="13" viewBox="0 0 13 13"><path d="M2.5 3.5A5 5 0 1 1 2 8" fill="none" stroke="#c8c8c8" stroke-width="1.2"/><path d="M0.5 1V5.5H5" fill="none" stroke="#c8c8c8" stroke-width="1.2"/></svg>
<!-- CANVAS -->
<div class="a" style="left:387px;top:100px;width:640px;height:320px;background:#646464"></div>
<svg class="a" style="left:1042px;top:150px" width="6" height="180" viewBox="0 0 6 180"><circle cx="92.5" cy="90" r="90" fill="#626262"/><circle cx="92.5" cy="90" r="89.5" fill="none" stroke="#747474" stroke-width="1.5"/></svg>
<svg class="a" style="left:399.5px;top:145px" width="190" height="190" viewBox="-95 -95 190 190"><defs>
<linearGradient id="ring" x1="0" y1="0" x2="0" y2="1"><stop offset="0" stop-color="#cecece"/><stop offset="0.3" stop-color="#a2a2a2"/><stop offset="0.5" stop-color="#878787"/><stop offset="0.78" stop-color="#8c8c8c"/><stop offset="1" stop-color="#a8a8a8"/></linearGradient>
<linearGradient id="ringside" x1="0" y1="0" x2="1" y2="0"><stop offset="0" stop-color="#000" stop-opacity="0.18"/><stop offset="0.2" stop-color="#000" stop-opacity="0"/><stop offset="0.8" stop-color="#000" stop-opacity="0"/><stop offset="1" stop-color="#000" stop-opacity="0.12"/></linearGradient>
<radialGradient id="face" cx="0.5" cy="0.38" r="0.6"><stop offset="0" stop-color="#fbfbfb"/><stop offset="0.7" stop-color="#f0f0f0"/><stop offset="1" stop-color="#e2e2e2"/></radialGradient>
<radialGradient id="faceshadow" cx="0.5" cy="0.5" r="0.5"><stop offset="0.86" stop-color="#000" stop-opacity="0.25"/><stop offset="1" stop-color="#000" stop-opacity="0"/></radialGradient>
<linearGradient id="hand" x1="0" y1="0" x2="1" y2="0"><stop offset="0" stop-color="#c8c8c8"/><stop offset="0.5" stop-color="#f2f2f2"/><stop offset="1" stop-color="#c0c0c0"/></linearGradient>
</defs><circle r="91" fill="url(#ring)"/><circle r="91" fill="url(#ringside)"/><circle r="90.5" fill="none" stroke="#bdbdbd" stroke-opacity="0.5" stroke-width="1"/><circle r="77" fill="url(#faceshadow)"/><circle r="71.5" fill="url(#face)"/><circle cx="30.7" cy="-52.7" r="2.3" fill="#c8c8c8"/><circle cx="30.7" cy="-53.3" r="2" fill="#f4f4f4"/><circle cx="53.3" cy="-30.2" r="2.3" fill="#c8c8c8"/><circle cx="53.3" cy="-30.8" r="2" fill="#f4f4f4"/><circle cx="61.5" cy="0.6" r="2.3" fill="#c8c8c8"/><circle cx="61.5" cy="-0.0" r="2" fill="#f4f4f4"/><circle cx="53.3" cy="31.3" r="2.3" fill="#c8c8c8"/><circle cx="53.3" cy="30.7" r="2" fill="#f4f4f4"/><circle cx="30.7" cy="53.9" r="2.3" fill="#c8c8c8"/><circle cx="30.7" cy="53.3" r="2" fill="#f4f4f4"/><circle cx="0.0" cy="62.1" r="2.3" fill="#c8c8c8"/><circle cx="0.0" cy="61.5" r="2" fill="#f4f4f4"/><circle cx="-30.7" cy="53.9" r="2.3" fill="#c8c8c8"/><circle cx="-30.7" cy="53.3" r="2" fill="#f4f4f4"/><circle cx="-53.3" cy="31.4" r="2.3" fill="#c8c8c8"/><circle cx="-53.3" cy="30.8" r="2" fill="#f4f4f4"/><circle cx="-61.5" cy="0.6" r="2.3" fill="#c8c8c8"/><circle cx="-61.5" cy="0.0" r="2" fill="#f4f4f4"/><circle cx="-53.3" cy="-30.2" r="2.3" fill="#c8c8c8"/><circle cx="-53.3" cy="-30.8" r="2" fill="#f4f4f4"/><circle cx="-30.8" cy="-52.7" r="2.3" fill="#c8c8c8"/><circle cx="-30.8" cy="-53.3" r="2" fill="#f4f4f4"/><rect x="-3.5" y="-80" width="7" height="80" rx="3.5" fill="url(#hand)" stroke="#a9a9a9" stroke-width="0.6"/><rect x="-0.6" y="-78" width="1.2" height="72" fill="#c93c3c"/><circle r="6.8" fill="#b0b0b0"/><circle r="6" cy="-0.3" fill="#efefef"/></svg><div class="t" style="left:434px;top:349px;width:120px;text-align:center;font-size:15.9px;font-weight:bold;color:#fff;text-shadow:0 1px 1px rgba(0,0,0,0.35)">New York</div>
<svg class="a" style="left:613px;top:145px" width="190" height="190" viewBox="-95 -95 190 190"><circle r="91" fill="url(#ring)"/><circle r="91" fill="url(#ringside)"/><circle r="90.5" fill="none" stroke="#bdbdbd" stroke-opacity="0.5" stroke-width="1"/><circle r="77" fill="url(#faceshadow)"/><circle r="71.5" fill="url(#face)"/><circle cx="30.7" cy="-52.7" r="2.3" fill="#c8c8c8"/><circle cx="30.7" cy="-53.3" r="2" fill="#f4f4f4"/><circle cx="53.3" cy="-30.2" r="2.3" fill="#c8c8c8"/><circle cx="53.3" cy="-30.8" r="2" fill="#f4f4f4"/><circle cx="61.5" cy="0.6" r="2.3" fill="#c8c8c8"/><circle cx="61.5" cy="-0.0" r="2" fill="#f4f4f4"/><circle cx="53.3" cy="31.3" r="2.3" fill="#c8c8c8"/><circle cx="53.3" cy="30.7" r="2" fill="#f4f4f4"/><circle cx="30.7" cy="53.9" r="2.3" fill="#c8c8c8"/><circle cx="30.7" cy="53.3" r="2" fill="#f4f4f4"/><circle cx="0.0" cy="62.1" r="2.3" fill="#c8c8c8"/><circle cx="0.0" cy="61.5" r="2" fill="#f4f4f4"/><circle cx="-30.7" cy="53.9" r="2.3" fill="#c8c8c8"/><circle cx="-30.7" cy="53.3" r="2" fill="#f4f4f4"/><circle cx="-53.3" cy="31.4" r="2.3" fill="#c8c8c8"/><circle cx="-53.3" cy="30.8" r="2" fill="#f4f4f4"/><circle cx="-61.5" cy="0.6" r="2.3" fill="#c8c8c8"/><circle cx="-61.5" cy="0.0" r="2" fill="#f4f4f4"/><circle cx="-53.3" cy="-30.2" r="2.3" fill="#c8c8c8"/><circle cx="-53.3" cy="-30.8" r="2" fill="#f4f4f4"/><circle cx="-30.8" cy="-52.7" r="2.3" fill="#c8c8c8"/><circle cx="-30.8" cy="-53.3" r="2" fill="#f4f4f4"/><rect x="-3.5" y="-80" width="7" height="80" rx="3.5" fill="url(#hand)" stroke="#a9a9a9" stroke-width="0.6"/><rect x="-0.6" y="-78" width="1.2" height="72" fill="#c93c3c"/><circle r="6.8" fill="#b0b0b0"/><circle r="6" cy="-0.3" fill="#efefef"/></svg><div class="t" style="left:648px;top:349px;width:120px;text-align:center;font-size:15.9px;font-weight:bold;color:#fff;text-shadow:0 1px 1px rgba(0,0,0,0.35)">London</div>
<svg class="a" style="left:826px;top:145px" width="190" height="190" viewBox="-95 -95 190 190"><circle r="91" fill="url(#ring)"/><circle r="91" fill="url(#ringside)"/><circle r="90.5" fill="none" stroke="#bdbdbd" stroke-opacity="0.5" stroke-width="1"/><circle r="77" fill="url(#faceshadow)"/><circle r="71.5" fill="url(#face)"/><circle cx="30.7" cy="-52.7" r="2.3" fill="#c8c8c8"/><circle cx="30.7" cy="-53.3" r="2" fill="#f4f4f4"/><circle cx="53.3" cy="-30.2" r="2.3" fill="#c8c8c8"/><circle cx="53.3" cy="-30.8" r="2" fill="#f4f4f4"/><circle cx="61.5" cy="0.6" r="2.3" fill="#c8c8c8"/><circle cx="61.5" cy="-0.0" r="2" fill="#f4f4f4"/><circle cx="53.3" cy="31.3" r="2.3" fill="#c8c8c8"/><circle cx="53.3" cy="30.7" r="2" fill="#f4f4f4"/><circle cx="30.7" cy="53.9" r="2.3" fill="#c8c8c8"/><circle cx="30.7" cy="53.3" r="2" fill="#f4f4f4"/><circle cx="0.0" cy="62.1" r="2.3" fill="#c8c8c8"/><circle cx="0.0" cy="61.5" r="2" fill="#f4f4f4"/><circle cx="-30.7" cy="53.9" r="2.3" fill="#c8c8c8"/><circle cx="-30.7" cy="53.3" r="2" fill="#f4f4f4"/><circle cx="-53.3" cy="31.4" r="2.3" fill="#c8c8c8"/><circle cx="-53.3" cy="30.8" r="2" fill="#f4f4f4"/><circle cx="-61.5" cy="0.6" r="2.3" fill="#c8c8c8"/><circle cx="-61.5" cy="0.0" r="2" fill="#f4f4f4"/><circle cx="-53.3" cy="-30.2" r="2.3" fill="#c8c8c8"/><circle cx="-53.3" cy="-30.8" r="2" fill="#f4f4f4"/><circle cx="-30.8" cy="-52.7" r="2.3" fill="#c8c8c8"/><circle cx="-30.8" cy="-53.3" r="2" fill="#f4f4f4"/><rect x="-3.5" y="-80" width="7" height="80" rx="3.5" fill="url(#hand)" stroke="#a9a9a9" stroke-width="0.6"/><rect x="-0.6" y="-78" width="1.2" height="72" fill="#c93c3c"/><circle r="6.8" fill="#b0b0b0"/><circle r="6" cy="-0.3" fill="#efefef"/></svg><div class="t" style="left:861px;top:349px;width:120px;text-align:center;font-size:15.9px;font-weight:bold;color:#fff;text-shadow:0 1px 1px rgba(0,0,0,0.35)">Oslo</div>
<div class="a" style="left:995px;top:388px;width:22px;height:22px;border:1px dotted #6d6d6d"></div>
<svg class="a" style="left:997px;top:390px" width="18" height="18" viewBox="0 0 18 18"><defs><linearGradient id="arr" x1="0" y1="0" x2="1" y2="0"><stop offset="0" stop-color="#8a8f2a"/><stop offset="1" stop-color="#6c7420"/></linearGradient></defs><path d="M1.5 5H9V1.5L16.5 9L9 16.5V13H1.5Z" fill="url(#arr)" stroke="#2a2a10" stroke-width="0.9"/></svg>
<div class="a" style="left:386px;top:99px;width:642px;height:322px;border:2px solid #4ba2ff"></div>
<div class="a" style="left:386px;top:83px;width:70px;height:17px;background:#4ba2ff;border-radius:3px 3px 0 0"></div>
<div class="t" style="left:391px;top:84px;font-size:13.7px;color:#fff">clockview</div>
<div class="a" style="left:384px;top:97px;width:6px;height:6px;background:#fff;border:1px solid #4ba2ff"></div>
<div class="a" style="left:702px;top:95px;width:10px;height:5px;border-radius:5px 5px 0 0;background:#1010f0"></div><div class="a" style="left:704px;top:97px;width:6px;height:6px;background:#fff;border:1px solid #4ba2ff"></div>
<div class="a" style="left:1024px;top:97px;width:6px;height:6px;background:#fff;border:1px solid #4ba2ff"></div>
<div class="a" style="left:382px;top:255px;width:5px;height:10px;border-radius:5px 0 0 5px;background:#1010f0"></div><div class="a" style="left:384px;top:257px;width:6px;height:6px;background:#fff;border:1px solid #4ba2ff"></div>
<div class="a" style="left:1027px;top:255px;width:5px;height:10px;border-radius:0 5px 5px 0;background:#1010f0"></div><div class="a" style="left:1024px;top:257px;width:6px;height:6px;background:#fff;border:1px solid #4ba2ff"></div>
<div class="a" style="left:384px;top:417px;width:6px;height:6px;background:#fff;border:1px solid #4ba2ff"></div>
<div class="a" style="left:702px;top:420px;width:10px;height:5px;border-radius:0 0 5px 5px;background:#1010f0"></div><div class="a" style="left:704px;top:417px;width:6px;height:6px;background:#fff;border:1px solid #4ba2ff"></div>
<div class="a" style="left:1024px;top:417px;width:6px;height:6px;background:#fff;border:1px solid #4ba2ff"></div>
<div class="a" style="left:1031px;top:100px;width:17px;height:0;border-top:1px dotted #9a9a9a"></div>
<div class="a" style="left:387px;top:424px;width:0;height:23px;border-left:1px dotted #9a9a9a"></div>
<div class="a" style="left:1048px;top:75px;width:10px;height:370px;background:#404244"></div><div class="a" style="left:1048px;top:254px;width:10px;height:23px;background:#58595b"></div>
<div class="a" style="left:370px;top:448px;width:675px;height:10px;background:#404244"></div>
<div class="a" style="left:701px;top:448px;width:55px;height:10px;background:#5b5c5e"></div>
<div class="a" style="left:1048px;top:448px;width:10px;height:10px;border-left:1px solid #bbb;border-top:1px solid #bbb"></div>
<div class="a" style="left:366px;top:458px;width:694px;height:2px;background:#3a3b3d"></div>
<!-- EDITOR -->
<style>#code .k{color:#808000}#code .s{color:#008000}#code .p{color:#800080}#code .m{color:#800000}#code .n{color:#000}#code .i{color:#000;font-style:italic}#code .d{color:#d0d0d0}</style>
<div id="code" class="a" style="left:366px;top:460px;width:684px;height:395px;background:#fff;overflow:hidden;font-family:'Liberation Mono',monospace;font-size:12px">
<div class="a" style="left:0;top:0;width:53px;height:395px;background:#ececec"></div>
<div class="a" style="left:53px;top:144px;width:631px;height:16px;background:#e9f2fd"></div>
<div class="t" style="left:0;top:1px;width:32px;text-align:right;line-height:16px;color:#b0b0b0">40</div>
<div class="t" style="left:0;top:17px;width:32px;text-align:right;line-height:16px;color:#b0b0b0">41</div>
<div class="t" style="left:57px;top:17px;line-height:16px"><span class="k">import</span><span class="d">·</span><span class="n">QtQuick</span><span class="d">·</span><span class="n">2.0</span></div>
<div class="t" style="left:0;top:33px;width:32px;text-align:right;line-height:16px;color:#b0b0b0">42</div>
<div class="t" style="left:57px;top:33px;line-height:16px"><span class="k">import</span><span class="d">·</span><span class="s">"content"</span><span class="d">·</span><span class="n">as</span><span class="d">·</span><span class="p">Content</span></div>
<div class="t" style="left:0;top:49px;width:32px;text-align:right;line-height:16px;color:#b0b0b0">43</div>
<div class="t" style="left:0;top:65px;width:32px;text-align:right;line-height:16px;color:#b0b0b0">44</div>
<div class="t" style="left:57px;top:65px;line-height:16px"><span class="p">Rectangle</span><span class="d">·</span><span class="n">{</span></div>
<div class="t" style="left:0;top:81px;width:32px;text-align:right;line-height:16px;color:#b0b0b0">45</div>
<div class="t" style="left:57px;top:81px;line-height:16px"><span class="d">·</span><span class="d">·</span><span class="d">·</span><span class="d">·</span><span class="m">id</span><span class="n">:</span><span class="d">·</span><span class="i">root</span></div>
<div class="t" style="left:0;top:97px;width:32px;text-align:right;line-height:16px;color:#b0b0b0">46</div>
<div class="t" style="left:57px;top:97px;line-height:16px"><span class="d">·</span><span class="d">·</span><span class="d">·</span><span class="d">·</span><span class="m">width</span><span class="n">:</span><span class="d">·</span><span class="n">640;</span><span class="d">·</span><span class="m">height</span><span class="n">:</span><span class="d">·</span><span class="n">320</span></div>
<div class="t" style="left:0;top:113px;width:32px;text-align:right;line-height:16px;color:#b0b0b0">47</div>
<div class="t" style="left:57px;top:113px;line-height:16px"><span class="d">·</span><span class="d">·</span><span class="d">·</span><span class="d">·</span><span class="m">color</span><span class="n">:</span><span class="d">·</span><span class="s">"#646464"</span></div>
<div class="t" style="left:0;top:129px;width:32px;text-align:right;line-height:16px;color:#b0b0b0">48</div>
<div class="t" style="left:0;top:145px;width:32px;text-align:right;line-height:16px;font-weight:bold;color:#777">49</div>
<div class="t" style="left:57px;top:145px;line-height:16px"><span class="d">·</span><span class="d">·</span><span class="d">·</span><span class="d">·</span><span class="p">ListView</span><span class="d">·</span><span class="n">{</span></div>
<div class="t" style="left:0;top:161px;width:32px;text-align:right;line-height:16px;color:#b0b0b0">50</div>
<div class="t" style="left:57px;top:161px;line-height:16px"><span class="d">·</span><span class="d">·</span><span class="d">·</span><span class="d">·</span><span class="d">·</span><span class="d">·</span><span class="d">·</span><span class="d">·</span><span class="m">id</span><span class="n">:</span><span class="d">·</span><span class="i">clockview</span></div>
<div class="t" style="left:0;top:177px;width:32px;text-align:right;line-height:16px;color:#b0b0b0">51</div>
<div class="t" style="left:57px;top:177px;line-height:16px"><span class="d">·</span><span class="d">·</span><span class="d">·</span><span class="d">·</span><span class="d">·</span><span class="d">·</span><span class="d">·</span><span class="d">·</span><span class="m">anchors.fill</span><span class="n">:</span><span class="d">·</span><span class="i">parent</span></div>
<div class="t" style="left:0;top:193px;width:32px;text-align:right;line-height:16px;color:#b0b0b0">52</div>
<div class="t" style="left:57px;top:193px;line-height:16px"><span class="d">·</span><span class="d">·</span><span class="d">·</span><span class="d">·</span><span class="d">·</span><span class="d">·</span><span class="d">·</span><span class="d">·</span><span class="m">orientation</span><span class="n">:</span><span class="d">·</span><span class="p">ListView</span><span class="n">.Horizontal</span></div>
<div class="t" style="left:0;top:209px;width:32px;text-align:right;line-height:16px;color:#b0b0b0">53</div>
<div class="t" style="left:57px;top:209px;line-height:16px"><span class="d">·</span><span class="d">·</span><span class="d">·</span><span class="d">·</span><span class="d">·</span><span class="d">·</span><span class="d">·</span><span class="d">·</span><span class="m">cacheBuffer</span><span class="n">:</span><span class="d">·</span><span class="n">2000</span></div>
<div class="t" style="left:0;top:225px;width:32px;text-align:right;line-height:16px;color:#b0b0b0">54</div>
<div class="t" style="left:57px;top:225px;line-height:16px"><span class="d">·</span><span class="d">·</span><span class="d">·</span><span class="d">·</span><span class="d">·</span><span class="d">·</span><span class="d">·</span><span class="d">·</span><span class="m">snapMode</span><span class="n">:</span><span class="d">·</span><span class="p">ListView</span><span class="n">.SnapOneItem</span></div>
<div class="t" style="left:0;top:241px;width:32px;text-align:right;line-height:16px;color:#b0b0b0">55</div>
<div class="t" style="left:57px;top:241px;line-height:16px"><span class="d">·</span><span class="d">·</span><span class="d">·</span><span class="d">·</span><span class="d">·</span><span class="d">·</span><span class="d">·</span><span class="d">·</span><span class="m">highlightRangeMode</span><span class="n">:</span><span class="d">·</span><span class="p">ListView</span><span class="n">.ApplyRange</span></div>
<div class="t" style="left:0;top:257px;width:32px;text-align:right;line-height:16px;color:#b0b0b0">56</div>
<div class="t" style="left:0;top:273px;width:32px;text-align:right;line-height:16px;color:#b0b0b0">57</div>
<div class="t" style="left:57px;top:273px;line-height:16px"><span class="d">·</span><span class="d">·</span><span class="d">·</span><span class="d">·</span><span class="d">·</span><span class="d">·</span><span class="d">·</span><span class="d">·</span><span class="m">delegate</span><span class="n">:</span><span class="d">·</span><span class="p">Content.Clock</span><span class="d">·</span><span class="n">{</span><span class="d">·</span><span class="m">city</span><span class="n">:</span><span class="d">·</span><span class="n">cityName;</span><span class="d">·</span><span class="m">shift</span><span class="n">:</span><span class="d">·</span><span class="n">timeShift</span><span class="d">·</span><span class="n">}</span></div>
<div class="t" style="left:0;top:289px;width:32px;text-align:right;line-height:16px;color:#b0b0b0">58</div>
<div class="t" style="left:57px;top:289px;line-height:16px"><span class="d">·</span><span class="d">·</span><span class="d">·</span><span class="d">·</span><span class="d">·</span><span class="d">·</span><span class="d">·</span><span class="d">·</span><span class="m">model</span><span class="n">:</span><span class="d">·</span><span class="p">ListModel</span><span class="d">·</span><span class="n">{</span></div>
<div class="t" style="left:0;top:305px;width:32px;text-align:right;line-height:16px;color:#b0b0b0">59</div>
<div class="t" style="left:57px;top:305px;line-height:16px"><span class="d">·</span><span class="d">·</span><span class="d">·</span><span class="d">·</span><span class="d">·</span><span class="d">·</span><span class="d">·</span><span class="d">·</span><span class="d">·</span><span class="d">·</span><span class="d">·</span><span class="d">·</span><span class="p">ListElement</span><span class="d">·</span><span class="n">{</span><span class="d">·</span><span class="m">cityName</span><span class="n">:</span><span class="d">·</span><span class="s">"New</span><span class="d">·</span><span class="s">York"</span><span class="n">;</span><span class="d">·</span><span class="m">timeShift</span><span class="n">:</span><span class="d">·</span><span class="n">-4</span><span class="d">·</span><span class="n">}</span></div>
<div class="t" style="left:0;top:321px;width:32px;text-align:right;line-height:16px;color:#b0b0b0">60</div>
<div class="t" style="left:57px;top:321px;line-height:16px"><span class="d">·</span><span class="d">·</span><span class="d">·</span><span class="d">·</span><span class="d">·</span><span class="d">·</span><span class="d">·</span><span class="d">·</span><span class="d">·</span><span class="d">·</span><span class="d">·</span><span class="d">·</span><span class="p">ListElement</span><span class="d">·</span><span class="n">{</span><span class="d">·</span><span class="m">cityName</span><span class="n">:</span><span class="d">·</span><span class="s">"London"</span><span class="n">;</span><span class="d">·</span><span class="m">timeShift</span><span class="n">:</span><span class="d">·</span><span class="n">0</span><span class="d">·</span><span class="n">}</span></div>
<div class="t" style="left:0;top:337px;width:32px;text-align:right;line-height:16px;color:#b0b0b0">61</div>
<div class="t" style="left:57px;top:337px;line-height:16px"><span class="d">·</span><span class="d">·</span><span class="d">·</span><span class="d">·</span><span class="d">·</span><span class="d">·</span><span class="d">·</span><span class="d">·</span><span class="d">·</span><span class="d">·</span><span class="d">·</span><span class="d">·</span><span class="p">ListElement</span><span class="d">·</span><span class="n">{</span><span class="d">·</span><span class="m">cityName</span><span class="n">:</span><span class="d">·</span><span class="s">"Oslo"</span><span class="n">;</span><span class="d">·</span><span class="m">timeShift</span><span class="n">:</span><span class="d">·</span><span class="n">1</span><span class="d">·</span><span class="n">}</span></div>
<div class="t" style="left:0;top:353px;width:32px;text-align:right;line-height:16px;color:#b0b0b0">62</div>
<div class="t" style="left:57px;top:353px;line-height:16px"><span class="d">·</span><span class="d">·</span><span class="d">·</span><span class="d">·</span><span class="d">·</span><span class="d">·</span><span class="d">·</span><span class="d">·</span><span class="d">·</span><span class="d">·</span><span class="d">·</span><span class="d">·</span><span class="p">ListElement</span><span class="d">·</span><span class="n">{</span><span class="d">·</span><span class="m">cityName</span><span class="n">:</span><span class="d">·</span><span class="s">"Mumbai"</span><span class="n">;</span><span class="d">·</span><span class="m">timeShift</span><span class="n">:</span><span class="d">·</span><span class="n">5.5</span><span class="d">·</span><span class="n">}</span></div>
<div class="t" style="left:0;top:369px;width:32px;text-align:right;line-height:16px;color:#b0b0b0">63</div>
<div class="t" style="left:57px;top:369px;line-height:16px"><span class="d">·</span><span class="d">·</span><span class="d">·</span><span class="d">·</span><span class="d">·</span><span class="d">·</span><span class="d">·</span><span class="d">·</span><span class="d">·</span><span class="d">·</span><span class="d">·</span><span class="d">·</span><span class="p">ListElement</span><span class="d">·</span><span class="n">{</span><span class="d">·</span><span class="m">cityName</span><span class="n">:</span><span class="d">·</span><span class="s">"Tokyo"</span><span class="n">;</span><span class="d">·</span><span class="m">timeShift</span><span class="n">:</span><span class="d">·</span><span class="n">9</span><span class="d">·</span><span class="n">}</span></div>
<div class="t" style="left:0;top:385px;width:32px;text-align:right;line-height:16px;color:#b0b0b0">64</div>
<div class="t" style="left:57px;top:385px;line-height:16px"><span class="d">·</span><span class="d">·</span><span class="d">·</span><span class="d">·</span><span class="d">·</span><span class="d">·</span><span class="d">·</span><span class="d">·</span><span class="d">·</span><span class="d">·</span><span class="d">·</span><span class="d">·</span><span class="p">ListElement</span><span class="d">·</span><span class="n">{</span><span class="d">·</span><span class="m">cityName</span><span class="n">:</span><span class="d">·</span><span class="s">"Brisbane"</span><span class="n">;</span><span class="d">·</span><span class="m">timeShift</span><span class="n">:</span><span class="d">·</span><span class="n">10</span><span class="d">·</span><span class="n">}</span></div>
<svg class="a" style="left:40px;top:68px" width="10" height="8" viewBox="0 0 10 8"><path d="M0.5 0.5H9.5L5 7.5Z" fill="#888"/></svg>
<svg class="a" style="left:40px;top:148px" width="10" height="8" viewBox="0 0 10 8"><path d="M0.5 0.5H9.5L5 7.5Z" fill="#888"/></svg>
<svg class="a" style="left:40px;top:292px" width="10" height="8" viewBox="0 0 10 8"><path d="M0.5 0.5H9.5L5 7.5Z" fill="#888"/></svg>
<div class="a" style="left:107px;top:145px;width:2px;height:15px;background:#000"></div>
</div>
<div class="a" style="left:1050px;top:460px;width:10px;height:392px;background:#404244"></div>
<div class="a" style="left:1050px;top:460px;width:10px;height:3px;background:#fff"></div>
<div class="a" style="left:1050px;top:463px;width:10px;height:196px;background:#5b5c5e"></div>
<div class="a" style="left:1053px;top:539px;width:5px;height:4px;background:#404244"></div>
<div class="a" style="left:1060px;top:617px;width:11px;height:199px;background:#404244"></div>
<div class="t" style="left:1059px;top:634px;font-size:11.6px;font-weight:bold;color:#e8e8e8;transform-origin:0 0;transform:translate(12px,0) rotate(90deg)">Form Editor</div>
<div class="t" style="left:1059px;top:736px;font-size:11.6px;font-weight:bold;color:#e8e8e8;transform-origin:0 0;transform:translate(12px,0) rotate(90deg)">Text Editor</div>
<svg class="a" style="left:1062px;top:833px" width="8" height="8" viewBox="0 0 8 8"><path d="M0.6 0.6H7.4V7.4H0.6Z M0.6 4H7.4" fill="none" stroke="#000" stroke-width="1.2"/></svg><svg class="a" style="left:1062px;top:860px" width="8" height="8" viewBox="0 0 8 8"><path d="M0.6 0.6H7.4V7.4H0.6Z M4 0.6V7.4" fill="none" stroke="#000" stroke-width="1.2"/></svg>
<div class="a hdr" style="left:366px;top:855px;width:694px;height:18px"></div>
<div class="a" style="left:366px;top:873px;width:705px;height:1px;background:#353638"></div><div class="a" style="left:1050px;top:852px;width:10px;height:3px;background:#fff"></div>
<div class="a" style="left:367px;top:876px;width:143px;height:37px;background:#46a0da;border:1px solid #2b2c2e"></div>
<div class="t" style="left:393px;top:886px;font-size:10px;color:#fff">base state</div>
<div class="a" style="left:1045px;top:884px;width:18px;height:18px;background:#4a4b4d;border:1px solid #2e2f30"></div>
<svg class="a" style="left:1047px;top:886px" width="14" height="14" viewBox="0 0 14 14"><path d="M7 1.5V12.5M1.5 7H12.5" stroke="#d8d8d8" stroke-width="1.6"/></svg>
<!-- PROPERTIES -->
<div class="a hdr" style="left:1072px;top:22px;width:327px;height:24px"></div>
<div class="t" style="left:1083px;top:27px;font-size:13.6px;color:#fff;">Properties</div>
<svg class="a" style="left:1263px;top:28px" width="9" height="12" viewBox="0 0 9 12"><path d="M0.5 5L4.5 0.5L8.5 5Z M0.5 7L4.5 11.5L8.5 7Z" fill="#c8c8c8"/></svg>
<div class="a" style="left:1276px;top:26px;width:1px;height:16px;background:#5a5c5e"></div>
<svg class="a" style="left:1352px;top:30px" width="16" height="13" viewBox="0 0 16 13"><path d="M0.5 0.5H8V11.5H0.5Z M0.5 6H8" fill="none" stroke="#c8c8c8" stroke-width="1.1"/><path d="M9.5 6H14.5M12 3.5V8.5" stroke="#c8c8c8" stroke-width="1.1"/></svg>
<svg class="a" style="left:1380px;top:31px" width="12" height="10" viewBox="0 0 12 10"><path d="M0.5 1.5H11.5V9.5H0.5Z" fill="none" stroke="#c8c8c8" stroke-width="1"/><rect x="0" y="0" width="12" height="2" fill="#c8c8c8"/><path d="M4 4.5H8L6 6.5Z" fill="#c8c8c8"/></svg>
<div class="a" style="left:1389px;top:46px;width:10px;height:385px;background:#404244"></div>
<div class="a" style="left:1389px;top:46px;width:10px;height:173px;background:#5b5c5e"></div>
<div class="a sec" style="left:1072px;top:46px;width:317px;height:17px"></div>
<svg class="a" style="left:1076px;top:52px" width="9" height="5" viewBox="0 0 9 5"><path d="M0.5 0H8.5L4.5 4.5Z" fill="#bdbdbd"/></svg>
<div class="t" style="left:1094px;top:48px;font-size:14px;font-weight:bold;color:#fff">Type</div>
<div class="t" style="left:1081px;top:74px;font-size:13.5px;color:#fff;">Type</div>
<div class="a" style="left:1175px;top:67px;width:188px;height:24px;background:#5b5c5e;border:1px solid #2a2b2c"></div>
<div class="t" style="left:1191px;top:74px;font-size:13.5px;color:#fff;">ListView</div>
<div class="t" style="left:1081px;top:101px;font-size:13.5px;color:#fff;">id</div>
<div class="a" style="left:1175px;top:95px;width:188px;height:24px;background:#262728"></div>
<div class="t" style="left:1191px;top:101px;font-size:13.5px;color:#fff;">clockview</div>
<svg class="a" style="left:1370px;top:101px" width="13" height="13" viewBox="0 0 13 13"><path d="M0.5 0.5H12.5V12.5H0.5Z" fill="none" stroke="#c8c8c8"/><path d="M3 3.5H9M3 6H8M3 8.5H9" stroke="#c8c8c8" stroke-width="0.8"/></svg>
<div class="a sec" style="left:1072px;top:123px;width:317px;height:18px"></div>
<svg class="a" style="left:1076px;top:130px" width="9" height="5" viewBox="0 0 9 5"><path d="M0 0H9L4.5 5Z" fill="#bdbdbd"/></svg>
<div class="t" style="left:1094px;top:125px;font-size:14px;font-weight:bold;color:#fff">Geometry</div>
<div class="t" style="left:1081px;top:151px;font-size:13.5px;color:#fff;">Position</div>
<div class="t" style="left:1175px;top:151px;font-size:13.5px;color:#fff;">X</div>
<div class="a" style="left:1191px;top:145px;width:64px;height:24px;background:#262728"></div><svg class="a" style="left:1196px;top:154px" width="7" height="7" viewBox="0 0 7 7"><circle cx="3.5" cy="3.5" r="2.2" fill="none" stroke="#c8c8c8" stroke-width="0.9"/></svg><div class="t" style="left:1191px;top:151px;width:45px;text-align:right;font-size:13.6px;color:#fff">0</div><svg class="a" style="left:1242px;top:149px" width="9" height="16" viewBox="0 0 9 16"><path d="M0.5 5L4.5 1L8.5 5Z M0.5 10.5L4.5 14.5L8.5 10.5Z" fill="#c4c4c4"/></svg>
<div class="t" style="left:1267px;top:151px;font-size:13.5px;color:#fff;">Y</div>
<div class="a" style="left:1283px;top:145px;width:64px;height:24px;background:#262728"></div><svg class="a" style="left:1288px;top:154px" width="7" height="7" viewBox="0 0 7 7"><circle cx="3.5" cy="3.5" r="2.2" fill="none" stroke="#c8c8c8" stroke-width="0.9"/></svg><div class="t" style="left:1283px;top:151px;width:45px;text-align:right;font-size:13.6px;color:#fff">0</div><svg class="a" style="left:1334px;top:149px" width="9" height="16" viewBox="0 0 9 16"><path d="M0.5 5L4.5 1L8.5 5Z M0.5 10.5L4.5 14.5L8.5 10.5Z" fill="#c4c4c4"/></svg>
<div class="t" style="left:1081px;top:179px;font-size:13.5px;color:#fff;">Size</div>
<div class="t" style="left:1174px;top:179px;font-size:13.5px;color:#fff;">W</div>
<div class="a" style="left:1191px;top:173px;width:64px;height:24px;background:#262728"></div><svg class="a" style="left:1196px;top:182px" width="7" height="7" viewBox="0 0 7 7"><circle cx="3.5" cy="3.5" r="2.2" fill="none" stroke="#c8c8c8" stroke-width="0.9"/></svg><div class="t" style="left:1191px;top:179px;width:45px;text-align:right;font-size:13.6px;color:#fff">640</div><svg class="a" style="left:1242px;top:177px" width="9" height="16" viewBox="0 0 9 16"><path d="M0.5 5L4.5 1L8.5 5Z M0.5 10.5L4.5 14.5L8.5 10.5Z" fill="#c4c4c4"/></svg>
<div class="t" style="left:1266px;top:179px;font-size:13.5px;color:#fff;">H</div>
<div class="a" style="left:1283px;top:173px;width:64px;height:24px;background:#262728"></div><svg class="a" style="left:1288px;top:182px" width="7" height="7" viewBox="0 0 7 7"><circle cx="3.5" cy="3.5" r="2.2" fill="none" stroke="#c8c8c8" stroke-width="0.9"/></svg><div class="t" style="left:1283px;top:179px;width:45px;text-align:right;font-size:13.6px;color:#fff">320</div><svg class="a" style="left:1334px;top:177px" width="9" height="16" viewBox="0 0 9 16"><path d="M0.5 5L4.5 1L8.5 5Z M0.5 10.5L4.5 14.5L8.5 10.5Z" fill="#c4c4c4"/></svg>
<div class="a sec" style="left:1072px;top:201px;width:317px;height:18px"></div>
<svg class="a" style="left:1076px;top:208px" width="9" height="5" viewBox="0 0 9 5"><path d="M0 0H9L4.5 5Z" fill="#bdbdbd"/></svg>
<div class="t" style="left:1094px;top:203px;font-size:14px;font-weight:bold;color:#fff">Visibility</div>
<div class="t" style="left:1081px;top:225px;font-size:13.5px;color:#fff;">Visibility</div>
<div class="a" style="left:1176px;top:224px;width:14px;height:14px;background:#353638"></div><svg class="a" style="left:1177px;top:225px" width="12" height="12" viewBox="0 0 12 12"><path d="M1.5 6.5L4.5 10.5Q7 4 11 1" fill="none" stroke="#c4c4c4" stroke-width="1.8"/></svg>
<svg class="a" style="left:1200px;top:228px" width="7" height="7" viewBox="0 0 7 7"><circle cx="3.5" cy="3.5" r="2.2" fill="none" stroke="#c8c8c8" stroke-width="0.9"/></svg>
<div class="t" style="left:1215px;top:225px;font-size:13.5px;color:#fff;">Is Visible</div>
<div class="a" style="left:1288px;top:224px;width:14px;height:14px;background:#353638"></div>
<svg class="a" style="left:1312px;top:228px" width="7" height="7" viewBox="0 0 7 7"><circle cx="3.5" cy="3.5" r="2.2" fill="none" stroke="#c8c8c8" stroke-width="0.9"/></svg>
<div class="t" style="left:1327px;top:225px;font-size:13.5px;color:#fff;">Clip</div>
<div class="t" style="left:1081px;top:249px;font-size:13.5px;color:#fff;">Opacity</div>
<div class="a" style="left:1175px;top:243px;width:64px;height:24px;background:#262728"></div><svg class="a" style="left:1180px;top:252px" width="7" height="7" viewBox="0 0 7 7"><circle cx="3.5" cy="3.5" r="2.2" fill="none" stroke="#c8c8c8" stroke-width="0.9"/></svg><div class="t" style="left:1175px;top:249px;width:45px;text-align:right;font-size:13.6px;color:#fff">1.00</div><svg class="a" style="left:1226px;top:247px" width="9" height="16" viewBox="0 0 9 16"><path d="M0.5 5L4.5 1L8.5 5Z M0.5 10.5L4.5 14.5L8.5 10.5Z" fill="#c4c4c4"/></svg>
<div class="a hdr" style="left:1072px;top:275px;width:317px;height:24px"></div>
<div class="a" style="left:1072px;top:275px;width:111px;height:28px;background:#fff"></div>
<div class="a" style="left:1072px;top:299px;width:317px;height:4px;background:#fff"></div>
<div class="t" style="left:1072px;top:282px;width:111px;text-align:center;font-size:13.4px;font-weight:bold;color:#3a3b3d">ListView</div>
<div class="t" style="left:1183px;top:282px;width:107px;text-align:center;font-size:13.4px;font-weight:bold;color:#fff">Layout</div>
<div class="t" style="left:1316px;top:282px;font-size:13.4px;font-weight:bold;color:#fff">Advanced</div>
<div class="a sec" style="left:1072px;top:303px;width:317px;height:18px"></div>
<svg class="a" style="left:1076px;top:310px" width="9" height="5" viewBox="0 0 9 5"><path d="M0 0H9L4.5 5Z" fill="#bdbdbd"/></svg>
<div class="t" style="left:1094px;top:305px;font-size:14px;font-weight:bold;color:#fff">Flickable</div>
<div class="t" style="left:1081px;top:331px;font-size:13.5px;color:#fff;">Content size</div>
<div class="t" style="left:1174px;top:331px;font-size:13.5px;color:#fff;">W</div>
<div class="a" style="left:1191px;top:325px;width:64px;height:24px;background:#262728"></div><svg class="a" style="left:1196px;top:334px" width="7" height="7" viewBox="0 0 7 7"><circle cx="3.5" cy="3.5" r="2.2" fill="none" stroke="#c8c8c8" stroke-width="0.9"/></svg><div class="t" style="left:1191px;top:331px;width:45px;text-align:right;font-size:13.6px;color:#fff">1493</div><svg class="a" style="left:1242px;top:329px" width="9" height="16" viewBox="0 0 9 16"><path d="M0.5 5L4.5 1L8.5 5Z M0.5 10.5L4.5 14.5L8.5 10.5Z" fill="#c4c4c4"/></svg>
<div class="t" style="left:1259px;top:331px;font-size:13.5px;color:#fff;">H</div>
<div class="a" style="left:1275px;top:325px;width:64px;height:24px;background:#262728"></div><svg class="a" style="left:1280px;top:334px" width="7" height="7" viewBox="0 0 7 7"><circle cx="3.5" cy="3.5" r="2.2" fill="none" stroke="#c8c8c8" stroke-width="0.9"/></svg><div class="t" style="left:1275px;top:331px;width:45px;text-align:right;font-size:13.6px;color:#fff">0</div><svg class="a" style="left:1326px;top:329px" width="9" height="16" viewBox="0 0 9 16"><path d="M0.5 5L4.5 1L8.5 5Z M0.5 10.5L4.5 14.5L8.5 10.5Z" fill="#c4c4c4"/></svg>
<div class="t" style="left:1081px;top:359px;font-size:13.5px;color:#fff;">Flick directi...</div>
<div class="a" style="left:1175px;top:353px;width:208px;height:23px;background:#5b5c5e;border:1px solid #2a2b2c"></div><svg class="a" style="left:1180px;top:362px" width="7" height="7" viewBox="0 0 7 7"><circle cx="3.5" cy="3.5" r="2.2" fill="none" stroke="#c8c8c8" stroke-width="0.9"/></svg><div class="t" style="left:1195px;top:359px;font-size:13.5px;color:#fff">HorizontalFlick</div><svg class="a" style="left:1366px;top:362px" width="10" height="6" viewBox="0 0 10 6"><path d="M0 0.5H10L5 5.5Z" fill="#c8c8c8"/></svg>
<div class="t" style="left:1081px;top:387px;font-size:13.5px;color:#fff;">Behavior</div>
<div class="a" style="left:1175px;top:381px;width:208px;height:23px;background:#5b5c5e;border:1px solid #2a2b2c"></div><svg class="a" style="left:1180px;top:390px" width="7" height="7" viewBox="0 0 7 7"><circle cx="3.5" cy="3.5" r="2.2" fill="none" stroke="#c8c8c8" stroke-width="0.9"/></svg><div class="t" style="left:1195px;top:387px;font-size:13.5px;color:#fff">DragAndOvershootBounds</div><svg class="a" style="left:1366px;top:390px" width="10" height="6" viewBox="0 0 10 6"><path d="M0 0.5H10L5 5.5Z" fill="#c8c8c8"/></svg>
<div class="t" style="left:1081px;top:411px;font-size:13.5px;color:#fff;">Interactive</div>
<div class="a" style="left:1176px;top:410px;width:14px;height:14px;background:#353638"></div><svg class="a" style="left:1177px;top:411px" width="12" height="12" viewBox="0 0 12 12"><path d="M1.5 6.5L4.5 10.5Q7 4 11 1" fill="none" stroke="#c4c4c4" stroke-width="1.8"/></svg>
<svg class="a" style="left:1200px;top:414px" width="7" height="7" viewBox="0 0 7 7"><circle cx="3.5" cy="3.5" r="2.2" fill="none" stroke="#c8c8c8" stroke-width="0.9"/></svg>
<div class="a" style="left:1175px;top:429px;width:64px;height:2px;background:#262728"></div>
<div class="a" style="left:1072px;top:431px;width:307px;height:10px;background:#5b5c5e"></div>
<div class="a" style="left:1379px;top:431px;width:20px;height:10px;background:#4a4b4d"></div>
<!-- CONNECTIONS -->
<div class="a hdr" style="left:1072px;top:441px;width:327px;height:25px;border-top:1px solid #333436"></div>
<div class="t" style="left:1083px;top:447px;font-size:13.6px;color:#fff;">Connections</div>
<svg class="a" style="left:1263px;top:448px" width="9" height="12" viewBox="0 0 9 12"><path d="M0.5 5L4.5 0.5L8.5 5Z M0.5 7L4.5 11.5L8.5 7Z" fill="#c8c8c8"/></svg>
<div class="a" style="left:1277px;top:446px;width:1px;height:16px;background:#5a5c5e"></div>
<svg class="a" style="left:1300px;top:447px" width="13" height="13" viewBox="0 0 13 13"><path d="M6.5 0.5V12.5M0.5 6.5H12.5" stroke="#d0d0d0" stroke-width="1.6"/></svg>
<svg class="a" style="left:1327px;top:447px" width="13" height="13" viewBox="0 0 13 13"><path d="M0.5 6.5H12.5" stroke="#707274" stroke-width="1.6"/></svg>
<svg class="a" style="left:1352px;top:450px" width="16" height="13" viewBox="0 0 16 13"><path d="M0.5 0.5H8V11.5H0.5Z M0.5 6H8" fill="none" stroke="#c8c8c8" stroke-width="1.1"/><path d="M9.5 6H14.5M12 3.5V8.5" stroke="#c8c8c8" stroke-width="1.1"/></svg>
<svg class="a" style="left:1380px;top:451px" width="12" height="10" viewBox="0 0 12 10"><path d="M0.5 1.5H11.5V9.5H0.5Z" fill="none" stroke="#c8c8c8" stroke-width="1"/><rect x="0" y="0" width="12" height="2" fill="#c8c8c8"/><path d="M4 4.5H8L6 6.5Z" fill="#c8c8c8"/></svg>
<div class="a hdr" style="left:1072px;top:466px;width:327px;height:22px"></div>
<div class="a" style="left:1072px;top:466px;width:88px;height:26px;background:#fff"></div>
<div class="a" style="left:1072px;top:488px;width:327px;height:4px;background:#fff"></div>
<div class="t" style="left:1081px;top:472px;font-size:11.5px;font-weight:bold;color:#3a3b3d">Connections</div>
<div class="t" style="left:1180px;top:472px;font-size:11.3px;font-weight:bold;color:#fff">Bindings</div>
<div class="t" style="left:1262px;top:472px;font-size:11.4px;font-weight:bold;color:#fff">Properties</div>
<div class="t" style="left:1352px;top:472px;font-size:11.4px;font-weight:bold;color:#fff">Ba</div>
<div class="a" style="left:1368px;top:466px;width:15px;height:22px;background:#4a4b4d;border:1px solid #3a3b3d"></div>
<div class="a" style="left:1383px;top:466px;width:16px;height:22px;background:#4a4b4d;border:1px solid #3a3b3d"></div>
<svg class="a" style="left:1372px;top:472px" width="7" height="10" viewBox="0 0 7 10"><path d="M6 0.5V9.5L0.5 5Z" fill="#6a6b6d"/></svg>
<svg class="a" style="left:1388px;top:472px" width="7" height="10" viewBox="0 0 7 10"><path d="M1 0.5V9.5L6.5 5Z" fill="#111"/></svg>
<div class="a" style="left:1074px;top:494px;width:77px;height:24px;background:#404244;border:1px solid #111"></div>
<div class="t" style="left:1074px;top:500px;width:77px;text-align:center;font-size:11.6px;color:#c8c8c8">Target</div>
<div class="a" style="left:1154px;top:494px;width:157px;height:24px;background:#404244;border:1px solid #111"></div>
<div class="t" style="left:1154px;top:500px;width:157px;text-align:center;font-size:11.6px;color:#c8c8c8">Signal Handler</div>
<div class="a" style="left:1314px;top:494px;width:100px;height:24px;background:#404244;border:1px solid #111"></div>
<div class="t" style="left:1375px;top:500px;font-size:11.6px;color:#c8c8c8">Action</div>
<div class="a" style="left:1072px;top:903px;width:222px;height:11px;background:#5b5c5e"></div>
<div class="a" style="left:1294px;top:903px;width:102px;height:11px;background:#404244"></div>
</body></html>
